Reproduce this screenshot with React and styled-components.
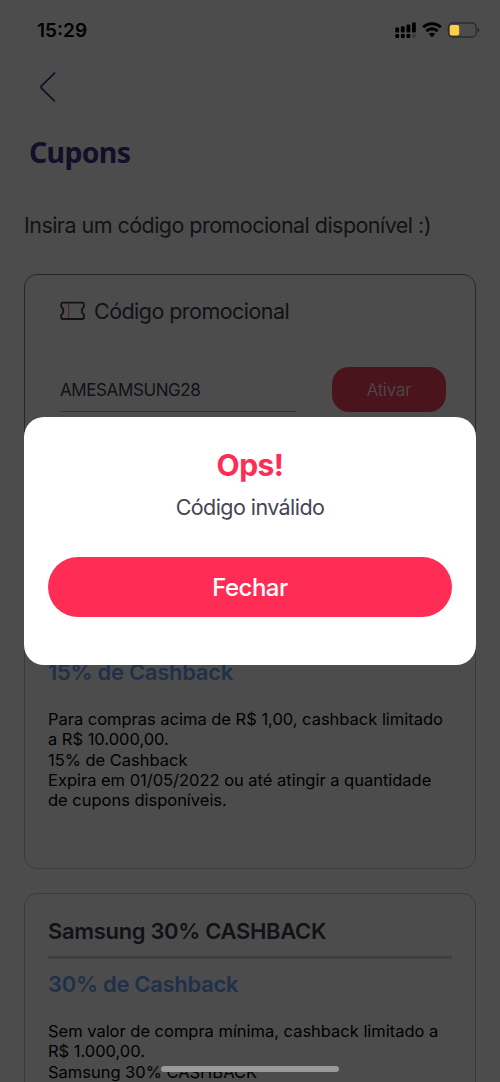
import React, { useState } from 'react';
import styled, { createGlobalStyle } from 'styled-components';

const coupons = [
    {
        id: 1,
        name: 'Samsung 15% CASHBACK',
        cashback: '15% de Cashback',
        details: [
            'Para compras acima de R$ 1,00, cashback limitado',
            'a R$ 10.000,00.',
            '15% de Cashback',
            'Expira em 01/05/2022 ou até atingir a quantidade',
            'de cupons disponíveis.',
        ],
    },
    {
        id: 2,
        name: 'Samsung 30% CASHBACK',
        cashback: '30% de Cashback',
        details: [
            'Sem valor de compra mínima, cashback limitado a',
            'R$ 1.000,00.',
            'Samsung 30% CASHBACK',
        ],
    },
]

const StatusIcons = () => (
    <svg width="86" height="18" viewBox="0 0 86 18">
        {/* signal */}
        <rect x="1.3" y="6.6" width="3.8" height="5" rx="1" />
        <rect x="6.9" y="5.2" width="3.8" height="6.4" rx="1" />
        <rect x="12.5" y="3.4" width="3.8" height="8.2" rx="1" />
        <rect x="18" y="1.4" width="3.8" height="10.2" rx="1" />
        <rect x="1.3" y="13" width="3.8" height="4" rx="1" />
        <rect x="6.9" y="13" width="3.8" height="4" rx="1" />
        <rect x="12.5" y="13" width="3.8" height="4" rx="1" />
        <rect x="18" y="13" width="3.8" height="4" rx="1" opacity="0.25" />
        {/* wifi */}
        <g fill="none" stroke="#000" strokeWidth="3">
            <path d="M29.2 6.3a12.6 12.6 0 0 1 17.6 0" />
            <path d="M32.4 10.1a8 8 0 0 1 11.2 0" />
        </g>
        <path d="M38 16.2l-3.2-3.2a4.5 4.5 0 0 1 6.4 0z" />
        {/* battery */}
        <rect x="54.4" y="2" width="27.8" height="14" rx="4.2" fill="none" stroke="#2c2c2c" strokeWidth="1.3" />
        <rect x="55.8" y="3.9" width="9.4" height="10.6" rx="2" fill="#fbce45" />
        <path d="M83.7 7c2 .6 2 3.7 0 4.3z" fill="#222" />
    </svg>
)

const TicketIcon = () => (
    <svg width="26" height="20" viewBox="0 0 26 20" fill="none">
        <path
            d="M2.8 1.6h19.6c1 0 1.5.5 1.5 1.3v2.6c0 1-1.9 1.6-1.9 2.9v2.8c0 1.3 1.9 1.9 1.9 2.9v2.6c0 .8-.5 1.3-1.5 1.3H2.8c-1 0-1.5-.5-1.5-1.3v-2.6c0-1 1.9-1.6 1.9-2.9V8.4c0-1.3-1.9-1.9-1.9-2.9V2.9c0-.8.5-1.3 1.5-1.3z"
            stroke="#3c3c4c"
            strokeWidth="1.8"
            strokeLinejoin="round"
        />
        <path d="M8.7 2.6v15" stroke="#ff4040" strokeWidth="1.2" strokeDasharray="1.8 0.8" />
    </svg>
)

const App = () => {

    const [code, setCode] = useState('AMESAMSUNG28')
    const [showModal, setShowModal] = useState(true)

    return (
        <Screen>
            <GlobalStyle />

            <StatusBar>
                <Clock>15:29</Clock>
                <StatusIcons />
            </StatusBar>

            <BackButton aria-label="Voltar">
                <svg width="20" height="32" viewBox="0 0 20 32" fill="none" stroke="#45308a" strokeWidth="1.8" strokeLinecap="round">
                    <path d="M16.6 2.2L3.8 14.6q-1.5 1.5 0 3L16.4 29.8" />
                </svg>
            </BackButton>

            <Title>Cupons</Title>
            <Intro>Insira um código promocional disponível :)</Intro>

            <PromoCard>
                <PromoHeading>
                    <TicketIcon />
                    Código promocional
                </PromoHeading>
                <PromoForm>
                    <CodeInput value={code} onChange={e => setCode(e.target.value)} />
                    <ActivateButton onClick={() => setShowModal(true)}>Ativar</ActivateButton>
                </PromoForm>
            </PromoCard>

            {coupons.map(coupon => (
                <CouponCard key={coupon.id}>
                    <CouponName>{coupon.name}</CouponName>
                    <Cashback>{coupon.cashback}</Cashback>
                    {coupon.details.map(line => <Detail key={line}>{line}</Detail>)}
                </CouponCard>
            ))}

            {showModal &&
                <Overlay>
                    <Modal>
                        <ModalTitle>Ops!</ModalTitle>
                        <ModalText>Código inválido</ModalText>
                        <CloseButton onClick={() => setShowModal(false)}>Fechar</CloseButton>
                    </Modal>
                </Overlay>
            }

            <HomeIndicator />
        </Screen>
    )
}



const GlobalStyle = createGlobalStyle`
    * {
        box-sizing: border-box;
    }

    body {
        margin: 0;
        background: #fff;
    }

    button, input {
        font-family: inherit;
        border: none;
        padding: 0;
    }
`

const Screen = styled.div`
    position: relative;
    width: 500px;
    height: 1082px;
    overflow: hidden;
    background: #fff;
    padding: 0 24px;
    font-family: Inter, "Liberation Sans", sans-serif;
    white-space: nowrap;
`

const StatusBar = styled.div`
    position: relative;
    z-index: 3;
    display: flex;
    align-items: center;
    justify-content: space-between;
    height: 60px;
    margin-right: -4px;
    padding-left: 13px;
`

const Clock = styled.span`
    font-size: 19px;
    font-weight: 600;
`

const BackButton = styled.button`
    display: block;
    width: 20px;
    height: 32px;
    margin: 11px 0 0 14px;
    background: none;
`

const Title = styled.h1`
    margin: 29px 0 0 5px;
    font-family: "Noto Sans", sans-serif;
    font-size: 28.5px;
    font-weight: 700;
    line-height: 40px;
    letter-spacing: -0.7px;
    color: #45308a;
`

const Intro = styled.p`
    margin: 38px 0 0;
    font-size: 21.5px;
    line-height: 30px;
    letter-spacing: -0.54px;
    color: #3c3c4c;
`

const PromoCard = styled.section`
    height: 282px;
    margin-top: 34px;
    padding: 21px 29px 0 35px;
    border: 1px solid #888;
    border-radius: 13px;
`

const PromoHeading = styled.div`
    display: flex;
    align-items: center;
    gap: 8px;
    height: 30px;
    font-size: 21.5px;
    letter-spacing: -0.55px;
    color: #3c3c4c;
`

const PromoForm = styled.div`
    display: flex;
    justify-content: space-between;
    margin-top: 41px;
`

const CodeInput = styled.input`
    width: 236px;
    height: 45px;
    padding-top: 2px;
    border-bottom: 1px solid #aaa;
    background: none;
    font-size: 17px;
    letter-spacing: -0.4px;
    color: #3c3c4c;
`

const ActivateButton = styled.button`
    width: 114px;
    height: 45px;
    border-radius: 17px;
    background: #f8455f;
    font-size: 17px;
    font-weight: 300;
    letter-spacing: -0.1px;
    color: #fff;
`

const CouponCard = styled.section`
    height: 288px;
    margin-top: 25px;
    padding: 21px 23px 0;
    border: 1px solid #c4c4c4;
    border-radius: 13px;

    & + & {
        margin-top: 24px;
    }
`

const CouponName = styled.h2`
    margin: 0 0 10px;
    padding: 1px 0 9px;
    border-bottom: 3px solid #d2cfe0;
    font-size: 22px;
    font-weight: 600;
    line-height: 31px;
    letter-spacing: -0.33px;
    color: #3c3c4c;
`

const Cashback = styled.h3`
    margin: 0 0 21px;
    font-size: 22px;
    font-weight: 600;
    line-height: 31px;
    letter-spacing: -0.3px;
    color: #6aa2f5;
`

const Detail = styled.p`
    margin: 0;
    font-size: 16.5px;
    line-height: 20.3px;
    letter-spacing: -0.02px;
    color: #000;
`

const Overlay = styled.div`
    position: absolute;
    inset: 0;
    z-index: 2;
    display: flex;
    align-items: center;
    justify-content: center;
    background: rgba(0, 0, 0, 0.7);
`

const Modal = styled.div`
    width: 452px;
    height: 248px;
    padding: 29px 24px 0;
    border-radius: 20px;
    background: #fff;
    text-align: center;
`

const ModalTitle = styled.h2`
    margin: 0;
    font-size: 30px;
    font-weight: 700;
    line-height: 38px;
    letter-spacing: -0.5px;
    color: #ff2d55;
`

const ModalText = styled.p`
    margin: 8px 0 35px;
    font-size: 21.5px;
    line-height: 30px;
    letter-spacing: -0.57px;
    color: #464555;
`

const CloseButton = styled.button`
    width: 100%;
    height: 60px;
    border-radius: 30px;
    background: #ff2d55;
    font-size: 24px;
    font-weight: 500;
    letter-spacing: -0.5px;
    color: #fff;
`

const HomeIndicator = styled.div`
    position: absolute;
    z-index: 3;
    left: 161px;
    bottom: 10px;
    width: 178px;
    height: 6px;
    border-radius: 3px;
    background: #999;
`

export default App;
